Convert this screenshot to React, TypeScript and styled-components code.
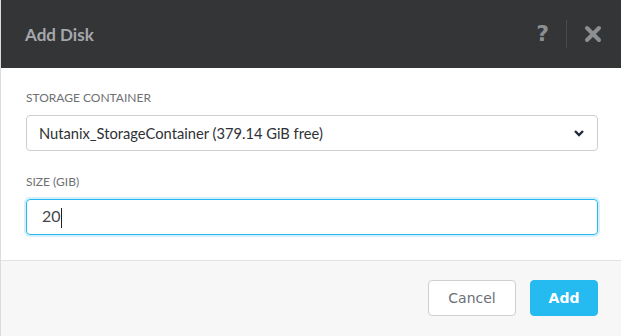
import React from 'react';
import styled, { createGlobalStyle } from 'styled-components';

const GlobalStyle = createGlobalStyle`
    html, body {
        margin: 0;
        padding: 0;
        background: #ffffff;
    }
    body {
        font-family: Lato, 'Open Sans', sans-serif;
    }
`;

const Modal = styled.div`
    width: 621px;
    height: 336px;
    display: flex;
    flex-direction: column;
    border-left: 1px solid #dcdcdc;
    box-sizing: border-box;
`;

const Header = styled.header`
    height: 68px;
    flex: none;
    background: #343537;
    display: flex;
    align-items: center;
    padding: 0 19px 0 24px;
`;

const Title = styled.h1`
    flex: 1;
    margin: 0;
    font-size: 17px;
    font-weight: 700;
    color: #a5a8ab;
`;

const HeaderActions = styled.div`
    display: flex;
    align-items: center;
    height: 28px;
`;

const HelpIcon = styled.span`
    font-family: 'DejaVu Sans', sans-serif;
    font-size: 22px;
    font-weight: 700;
    color: #8c8f92;
    padding-right: 17px;
    line-height: 1;
`;

const Divider = styled.span`
    width: 1px;
    height: 28px;
    background: #4a4b4e;
    margin-right: 17px;
`;

const Body = styled.section`
    flex: none;
    height: 193px;
    padding: 22px 23px 0 25px;
    box-sizing: border-box;
    border-bottom: 1px solid #e2e2e2;
`;

const Label = styled.div`
    font-size: 12px;
    color: #6d7074;
    line-height: 16px;
    margin-bottom: 9px;
`;

const Field = styled.div<{ $focused?: boolean }>`
    height: 36px;
    box-sizing: border-box;
    border: 1px solid ${(p) => (p.$focused ? '#26b8ef' : '#cfcfcf')};
    border-radius: 4px;
    display: flex;
    align-items: center;
    padding: 0 12px 0 ${(p) => (p.$focused ? '15px' : '12px')};
    font-size: ${(p) => (p.$focused ? '16px' : '14.7px')};
    color: ${(p) => (p.$focused ? '#45484c' : '#2e3135')};
    box-shadow: ${(p) => (p.$focused ? '0 0 0 2px #d4f0fc' : 'none')};
    margin-bottom: 23px;
`;

const FieldText = styled.span`
    flex: 1;
`;

const Caret = styled.span`
    display: inline-block;
    width: 1px;
    height: 20px;
    background: #222;
    vertical-align: middle;
`;

const Footer = styled.footer`
    flex: 1;
    background: #f7f7f7;
    display: flex;
    justify-content: flex-end;
    align-items: flex-start;
    gap: 14px;
    padding: 19px 23px 0 0;
`;

const Button = styled.button<{ $primary?: boolean }>`
    height: 36px;
    padding: 0;
    box-sizing: border-box;
    border-radius: 4px;
    font-family: 'DejaVu Sans', sans-serif;
    font-size: 14px;
    cursor: pointer;
    border: 1px solid ${(p) => (p.$primary ? '#25baf0' : '#cfcfcf')};
    background: ${(p) => (p.$primary ? '#25baf0' : '#ffffff')};
    color: ${(p) => (p.$primary ? '#ffffff' : '#6b7076')};
    font-weight: ${(p) => (p.$primary ? 700 : 400)};
    width: ${(p) => (p.$primary ? '68px' : '88px')};
`;

const App = (): React.ReactElement => {
    return (
        <>
            <GlobalStyle />
            <Modal>
                <Header>
                    <Title>Add Disk</Title>
                    <HeaderActions>
                        <HelpIcon>?</HelpIcon>
                        <Divider />
                        <svg width="18" height="18" viewBox="0 0 18 18">
                            <path d="M3 3 L15 15 M15 3 L3 15" stroke="#8c8f92" strokeWidth="4" strokeLinecap="round" />
                        </svg>
                    </HeaderActions>
                </Header>
                <Body>
                    <Label>STORAGE CONTAINER</Label>
                    <Field>
                        <FieldText>Nutanix_StorageContainer (379.14 GiB free)</FieldText>
                        <svg width="12" height="10" viewBox="0 0 12 10">
                            <path d="M2 3 L6 7 L10 3" stroke="#1f2a3a" strokeWidth="2.4" fill="none" />
                        </svg>
                    </Field>
                    <Label>SIZE (GIB)</Label>
                    <Field $focused>
                        <FieldText>
                            20<Caret />
                        </FieldText>
                    </Field>
                </Body>
                <Footer>
                    <Button>Cancel</Button>
                    <Button $primary>Add</Button>
                </Footer>
            </Modal>
        </>
    );
};

export default App;
